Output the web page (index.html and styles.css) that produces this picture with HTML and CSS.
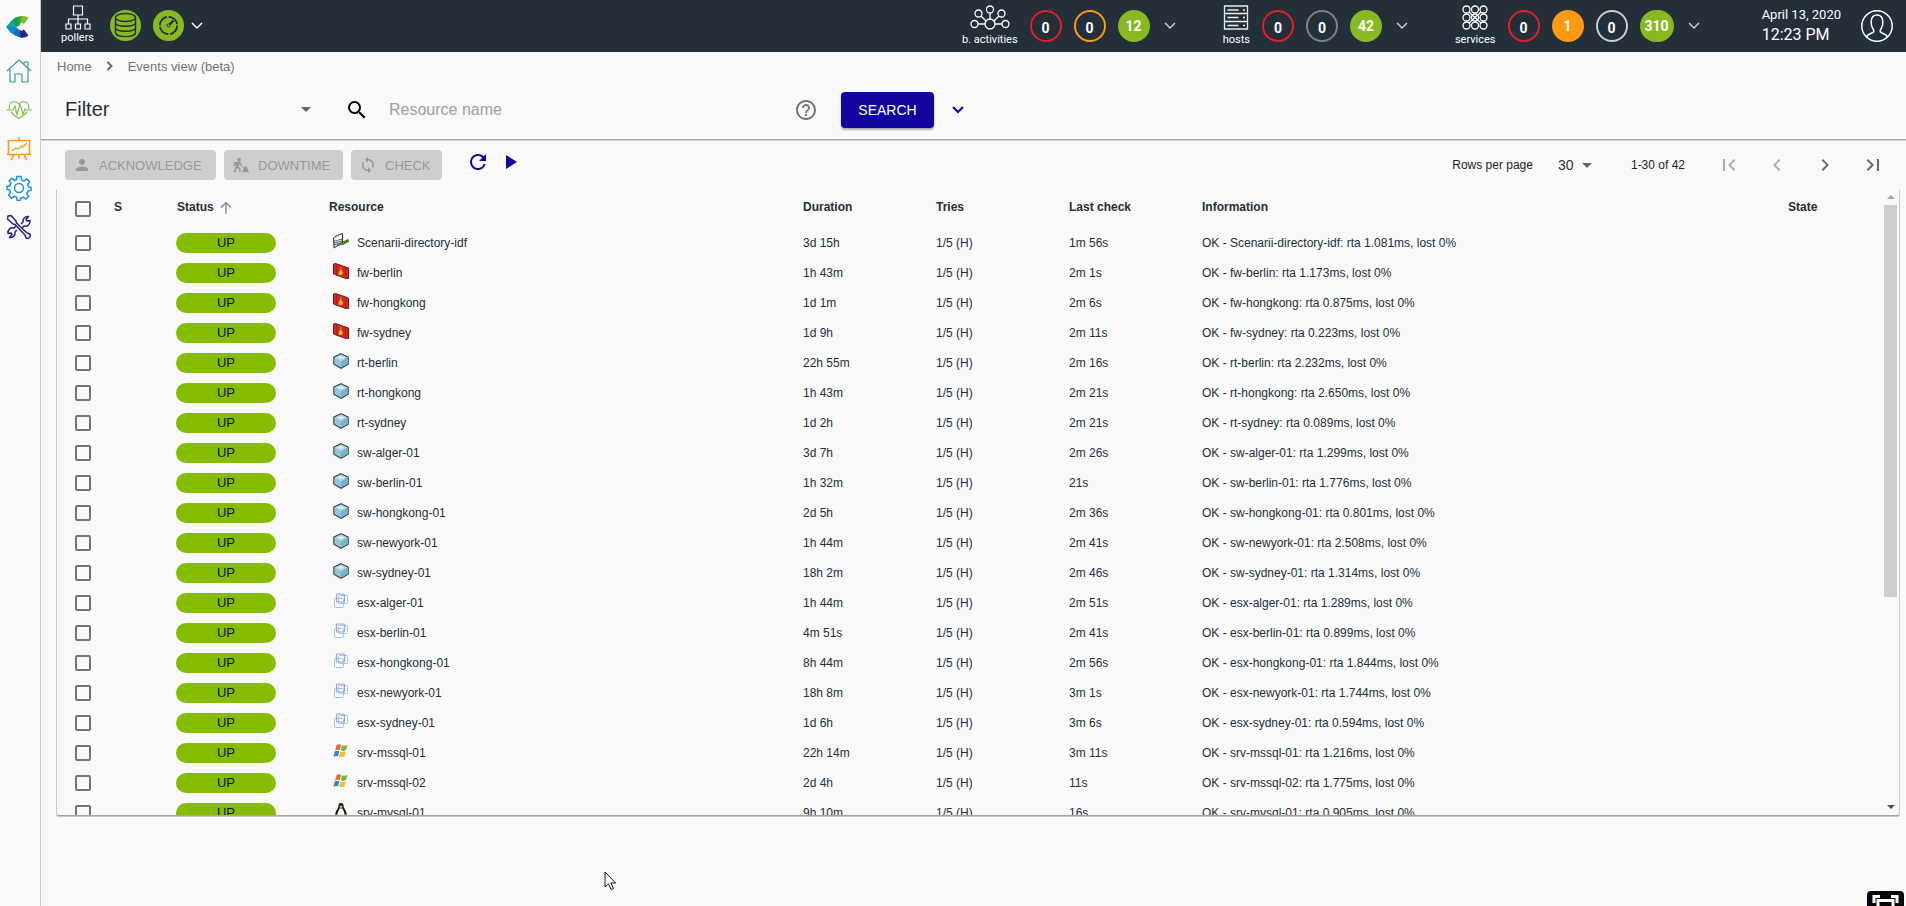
FILE: index.html
```html
<!DOCTYPE html>
<html lang="en">
<head>
<meta charset="utf-8">
<title>Events view</title>
<link rel="stylesheet" href="styles.css">
</head>
<body>
<svg class="sprite" aria-hidden="true">
  <symbol id="chev" viewBox="0 0 12 8"><path d="M1 1l5 5 5-5" fill="none" stroke="currentColor" stroke-width="1.5"/></symbol>
  <symbol id="caret" viewBox="0 0 10 5"><path d="M0 0h10L5 5z" fill="currentColor"/></symbol>
  <symbol id="scenario" viewBox="0 0 16 16"><path d="M.5 5L4 2.500 9.500.5v9L1 15z" fill="#e8e8e8" stroke="#333"/><path d="M1 8l8-2M1 10l8-2M1 12l7-2" stroke="#333" stroke-width=".8"/><path d="M2 5.500l6-3v3L2 7.500z" fill="#fff"/><path d="M6 11l9-4.500 1 1.500-6 3.500z" fill="#4f9a18" stroke="#27470d" stroke-width=".8"/><path d="M5 10l4 1-3 2.500L4 12z" fill="#777"/></symbol>
  <symbol id="firewall" viewBox="0 0 16 16"><path d="M.5 1l2-.5 13 4.500v10.500l-2 .2L.5 11z" fill="#d92626" stroke="#6d1714"/><path d="M3.500 1v11.500M12.500 5v10" stroke="#8d1716" stroke-width=".6"/><path d="M8 2.800C10 5 7.500 6 9.500 8c1.500 2 .5 4-1.500 4.500C5.500 13 4.500 11 5.500 9 7 7 7 5 8 2.800z" fill="#f9a72b" stroke="#80400b" stroke-width=".7"/></symbol>
  <symbol id="router" viewBox="0 0 16 16"><path d="M8 .7l7.200 3.500v7L8 15.300.8 11.200v-7z" fill="#93c5d8" stroke="#32424d" stroke-width="1.100"/><path d="M8 1.500l6.500 3L8 8.500 1.500 4.500z" fill="#b4d4e0"/><path d="M8 8.500l6.500-4V11L8 14.600z" fill="#79b3ca"/><path d="M4.500 4.500h6M6 3.500l4 2.500M10 3.500L6 6" stroke="#f6ffff" stroke-width=".7"/></symbol>
  <symbol id="esx" viewBox="0 0 16 16"><g fill="none"><rect x="5.500" y="2.500" width="9" height="8" rx="1" stroke="#92cbea"/><rect x="1.500" y="5.500" width="9" height="9" rx="1" stroke="#92cbea"/><rect x="3.500" y="1" width="8" height="8" rx="1" stroke="#a09fe0" stroke-width="1.200"/></g></symbol>
  <symbol id="windows" viewBox="0 0 16 16"><path d="M3.500 2.200q2.300-1.500 4.600-.3L6.700 7.200q-2.300-1-4.600.2z" fill="#e8672c"/><path d="M9 2.300q2.500 1 5.500-.4l-1.400 5.200q-2.800 1.500-5.400.2z" fill="#7cb342"/><path d="M1.800 8.400q2.400-1.200 4.600-.2L5 13.300q-2.300-1-4.600.4z" fill="#3284cf"/><path d="M7.400 8.500q2.700 1.200 5.400-.2l-1.500 5.200q-2.600 1.500-5.300.1z" fill="#f7bd31"/></symbol>
  <symbol id="linux" viewBox="0 0 16 16"><path d="M8 0c2 0 2.800 1.500 2.700 3.800.3 1.800 3.300 4.400 3 8.200L12 15H4l-1.700-3C2 8.500 5 5.600 5.300 3.800 5.200 1.500 6 0 8 0z" fill="#171717"/><path d="M6.500 5.500h3c.7 2 2.300 4 2 7L8 15l-3.500-2.500C4.300 9.500 5.800 7.500 6.500 5.500z" fill="#fff"/><path d="M6 3.500l2-1 2 1-2 1.800z" fill="#f2b321"/><path d="M1 13l3-2 3 4H2zM15 13l-3-2-3 4h5z" fill="#e9a91c"/></symbol>
</svg>
<div class="app">
  <nav class="sidebar" aria-label="Main">
    <a href="#" class="logo" aria-label="Centreon"><svg width="24" height="22" viewBox="0 0 24 22"><path d="M9 2Q12 0 17 0l-3 9-3 2-6-5z" fill="#35a936"/><path d="M16 0q4-.2 6.500 1.500L18 8q-2-1.500-4-1z" fill="#86be22"/><path d="M10 1L4 6l6 5 4-4z" fill="#15a05a"/><path d="M5 5L0 11l5 6 6-6z" fill="#17a5a4"/><path d="M1 11l4 6 5 3 4-5-4-4z" fill="#0b8de0"/><path d="M9 19q4 3 8 2.500L14 14l-4-1-3 4z" fill="#126bc0"/><path d="M14 14q2 1.500 4-.5l4.500 6q-4 3-8 2.200z" fill="#262088"/></svg></a>
    <a href="#" class="teal" aria-label="Home"><svg width="26" height="26" viewBox="0 0 26 26"><path d="M1 13L13 2l12 11M4 11v13h5v-8h7v8h6V11M18 6V4h4v6" fill="none" stroke="currentColor" stroke-width="1.200"/></svg></a>
    <a href="#" class="green" aria-label="Monitoring"><svg width="26" height="26" viewBox="0 0 26 26"><path d="M0 13h7l2-4 2 9 3-11 3 10 2-5 1 1h6M3.500 12C2 4 9 3 13 7c4-4 11-3 9.500 5M5 15q3 3.500 8 6.500 5-3 8-6.500" fill="none" stroke="currentColor" stroke-width="1.200"/></svg></a>
    <a href="#" class="orange" aria-label="Reporting"><svg width="26" height="26" viewBox="0 0 26 26"><path d="M2.500 4.500h21v14h-21zM13 1v3M1 18.500h24M8 19l-3 5M18 19l3 5M13 19v4" fill="none" stroke="currentColor" stroke-width="1.600"/><path d="M6 15l4-3 2 1 4-3 1 1 4-4" fill="none" stroke="currentColor" stroke-width="1.400"/></svg></a>
    <a href="#" class="blue" aria-label="Configuration"><svg width="26" height="26" viewBox="0 0 26 26"><path d="M11 1.500h4l.7 3.400 2.300 1 2.900-2 2.700 2.800-1.900 2.900 1 2.300 2.300.5v3l-3.200.7-1 2.400 1.900 2.900-2.800 2.700-2.900-1.900-2.300 1-.5 2.300h-3l-.6-3.200-2.400-1-2.900 1.900L2.600 20l1.900-2.800-1-2.400-2.500-.4v-3l3-.6 1-2.400L3.200 6l2.700-2.700 2.900 2 1.700-.7z" fill="none" stroke="currentColor" stroke-width="1.500"/><circle cx="13" cy="13" r="4.500" fill="none" stroke="currentColor" stroke-width="1.400"/></svg></a>
    <a href="#" class="navy" aria-label="Administration"><svg width="26" height="26" viewBox="0 0 26 26"><g fill="none" stroke="currentColor" stroke-width="1.500" stroke-linejoin="round"><path d="M2 2l3-.5L10 7l.5 2L21 19l3 1 .5 2-2.500 2.500-2-.5L19 21 9 10.500 7 10 1.500 5z"/><path d="M15 10l2-2c-.5-3 2-6 5.500-5.500L20 5.500l1 1.500 3-.5c.5 4-3 6.500-6 5.500l-2 2M11 16l-2 2c.5 3.500-2 6-5.500 5.500L6 20.500 5 19l-3 .5c-.5-4 3-6.500 6-5.500l2-2"/></g></svg></a>
  </nav>
  <div class="page">
    <header class="topbar">
      <div class="topic"><svg width="26" height="25" viewBox="0 0 26 25"><g fill="none" stroke="#fff" stroke-width="1.200"><path d="M8.500 1h9v9h-9zM13 10v9M3.500 19v-5h19v5M1 19h5v5H1zM10.500 19h5v5h-5zM20 19h5v5h-5z"/></g></svg><span>pollers</span></div>
      <svg class="status-icon" width="31" height="31" viewBox="0 0 31 31"><circle cx="15.500" cy="15.500" r="15.500" fill="#88b922"/><g fill="none" stroke="#232f39" stroke-width="1.400"><ellipse cx="15.500" cy="7.500" rx="10" ry="4"/><path d="M5.500 7.500v15c0 5.500 20 5.500 20 0v-15M5.500 12.500c0 5 20 5 20 0M5.500 17.500c0 5 20 5 20 0"/></g></svg>
      <svg class="status-icon" width="31" height="31" viewBox="0 0 31 31"><circle cx="15.500" cy="15.500" r="15.500" fill="#88b922"/><g fill="none" stroke="#232f39"><circle cx="15.500" cy="15.500" r="8.700" stroke-width="1.800" stroke-dasharray="12 1.600"/><circle cx="15.500" cy="15.500" r="1.500"/><path d="M16.500 14.500l4-4" stroke-width="2.400"/></g></svg>
      <button class="more" aria-label="Poller details"><svg width="12" height="8"><use href="#chev"/></svg></button>
      <div class="counters">
        <div class="group">
          <div class="topic"><svg width="40" height="25" viewBox="0 0 40 25"><g fill="none" stroke="#fff" stroke-width="1.300"><circle cx="20" cy="19" r="5"/><circle cx="20" cy="4.500" r="3.500"/><circle cx="8.500" cy="8.500" r="3.500"/><circle cx="31.500" cy="8.500" r="3.500"/><circle cx="4.500" cy="19" r="3.500"/><circle cx="35.500" cy="19" r="3.500"/><path d="M20 8v6M11 11l5 5M29 11l-5 5M8 19h7M25 19h7"/></g></svg><span>b. activities</span></div>
          <a href="#" class="count red">0</a><a href="#" class="count amber">0</a><a href="#" class="count ok">12</a>
          <button class="more" aria-label="Activities details"><svg width="12" height="8"><use href="#chev"/></svg></button>
        </div>
        <div class="group">
          <div class="topic"><svg width="26" height="25" viewBox="0 0 26 25"><g fill="none" stroke="#eee" stroke-width="1.300"><path d="M1.500 1h23v23h-23zM1.500 8.500h23M1.500 16.500h23M4.500 5h11M4.500 12.500h11M4.500 20.500h11M20 5h2M20 12.500h2M20 20.500h2"/></g></svg><span>hosts</span></div>
          <a href="#" class="count red">0</a><a href="#" class="count grey">0</a><a href="#" class="count ok">42</a>
          <button class="more" aria-label="Hosts details"><svg width="12" height="8"><use href="#chev"/></svg></button>
        </div>
        <div class="group">
          <div class="topic"><svg width="26" height="25" viewBox="0 0 26 25"><g fill="none" stroke="#fff" stroke-width="1.300"><circle cx="4.500" cy="4.500" r="3.500"/><circle cx="13" cy="4.500" r="3.500"/><circle cx="21.500" cy="4.500" r="3.500"/><circle cx="4.500" cy="12.500" r="3.500"/><circle cx="13" cy="12.500" r="3.500"/><circle cx="21.500" cy="12.500" r="3.500"/><circle cx="4.500" cy="20.500" r="3.500"/><circle cx="13" cy="20.500" r="3.500"/><circle cx="21.500" cy="20.500" r="3.500"/><path d="M7 7l12 11M19 7L7 18"/></g></svg><span>services</span></div>
          <a href="#" class="count red">0</a><a href="#" class="count warn">1</a><a href="#" class="count light">0</a><a href="#" class="count ok">310</a>
          <button class="more" aria-label="Services details"><svg width="12" height="8"><use href="#chev"/></svg></button>
        </div>
      </div>
      <div class="clock"><span class="date">April 13, 2020</span><span class="time">12:23 PM</span></div>
      <button class="user" aria-label="Profile"><svg width="32" height="32" viewBox="0 0 32 32"><g fill="none" stroke="#fff" stroke-width="1.500"><circle cx="16" cy="16" r="15.200"/><path d="M5.500 27c1-3 5-3.500 6.500-4.500 2-1.500.5-3-.5-4.500-1-2-1.500-4-1.300-6.500.2-4 2.300-6.500 5.800-6.500s5.600 2.500 5.800 6.500c.2 2.500-.3 4.500-1.300 6.500-1 1.500-2.500 3-.5 4.500 1.500 1 5.500 1.500 6.500 4.500"/></g></svg></button>
    </header>
    <nav class="crumbs" aria-label="Breadcrumb"><a href="#">Home</a><svg width="8" height="10" viewBox="0 0 8 10"><path d="M1.500 1l4 4-4 4" fill="none" stroke="#666" stroke-width="1.900"/></svg><a href="#">Events view (beta)</a></nav>
    <form class="filters">
      <button type="button" class="filter-select"><span>Filter</span><svg width="10" height="5"><use href="#caret"/></svg></button>
      <svg class="magnifier" width="24" height="24" viewBox="0 0 24 24"><path d="M15.500 14h-.79l-.28-.27A6.471 6.471 0 0 0 16 9.500 6.500 6.500 0 1 0 9.500 16c1.610 0 3.090-.59 4.230-1.570l.27.28v.79l5 4.990L20.490 19l-4.990-5zm-6 0C7.010 14 5 11.990 5 9.500S7.010 5 9.500 5 14 7.010 14 9.500 11.990 14 9.500 14z"/></svg>
      <input class="search-input" type="text" placeholder="Resource name" aria-label="Resource name">
      <button type="button" class="help" aria-label="Help"><svg width="24" height="24" viewBox="0 0 24 24"><path fill="#757575" d="M11 18h2v-2h-2v2zm1-16C6.480 2 2 6.480 2 12s4.480 10 10 10 10-4.480 10-10S17.520 2 12 2zm0 18c-4.410 0-8-3.590-8-8s3.590-8 8-8 8 3.590 8 8-3.590 8-8 8zm0-14c-2.210 0-4 1.790-4 4h2c0-1.100.9-2 2-2s2 .9 2 2c0 2-3 1.750-3 5h2c0-2.250 3-2.500 3-5 0-2.210-1.790-4-4-4z"/></svg></button>
      <button type="submit" class="search-button">SEARCH</button>
      <button type="button" class="expand" aria-label="More filters"><svg width="12" height="8" viewBox="0 0 12 8"><path d="M1 1l5 5 5-5" fill="none" stroke="currentColor" stroke-width="2"/></svg></button>
    </form>
    <div class="toolbar">
      <button class="action ack" disabled><svg width="18" height="18" viewBox="0 0 24 24"><path fill="currentColor" d="M12 12c2.210 0 4-1.790 4-4s-1.790-4-4-4-4 1.790-4 4 1.790 4 4 4zm0 2c-2.670 0-8 1.340-8 4v2h16v-2c0-2.660-5.330-4-8-4z"/></svg>ACKNOWLEDGE</button>
      <button class="action down" disabled><svg width="18" height="18" viewBox="0 0 20 20"><g fill="currentColor"><circle cx="8" cy="4" r="2"/><path d="M6 6l3 .5 2 3.500-1 1-2-2-.5 3 2 2v4H8v-3l-2.500-2L4 18H2l2-7V9l-1 2H1.500l1-4zM16 11l3 7h-8l3-6z"/></g><path d="M8 8l6 6" stroke="currentColor"/></svg>DOWNTIME</button>
      <button class="action check" disabled><svg width="18" height="18" viewBox="0 0 24 24"><path fill="currentColor" d="M12 4V1L8 5l4 4V6c3.310 0 6 2.690 6 6 0 1.010-.25 1.970-.7 2.800l1.460 1.460A7.930 7.930 0 0 0 20 12c0-4.420-3.580-8-8-8zm0 14c-3.310 0-6-2.690-6-6 0-1.010.25-1.970.7-2.800L5.240 7.740A7.930 7.930 0 0 0 4 12c0 4.420 3.580 8 8 8v3l4-4-4-4v3z"/></svg>CHECK</button>
      <button class="icon-button refresh" aria-label="Refresh"><svg width="24" height="24" viewBox="0 0 24 24"><path fill="currentColor" d="M17.650 6.350A7.958 7.958 0 0 0 12 4a8 8 0 1 0 7.730 10h-2.080A5.990 5.990 0 0 1 12 18c-3.310 0-6-2.690-6-6s2.690-6 6-6c1.660 0 3.140.69 4.220 1.780L13 11h7V4l-2.350 2.350z"/></svg></button>
      <button class="icon-button play" aria-label="Autorefresh"><svg width="24" height="24" viewBox="0 0 24 24"><path fill="currentColor" d="M8 5v14l11-7z"/></svg></button>
      <div class="pager">
        <label for="rows">Rows per page</label>
        <span class="rows"><select id="rows"><option>30</option></select><svg width="10" height="5"><use href="#caret"/></svg></span>
        <span class="range">1-30 of 42</span>
        <button disabled aria-label="First page"><svg width="24" height="24" viewBox="0 0 24 24"><path fill="currentColor" d="M18.410 16.590L13.820 12l4.590-4.590L17 6l-6 6 6 6zM6 6h2v12H6z"/></svg></button>
        <button disabled aria-label="Previous page"><svg width="24" height="24" viewBox="0 0 24 24"><path fill="currentColor" d="M15.410 7.410L14 6l-6 6 6 6 1.410-1.410L10.830 12z"/></svg></button>
        <button aria-label="Next page"><svg width="24" height="24" viewBox="0 0 24 24"><path fill="currentColor" d="M10 6L8.590 7.410 13.170 12l-4.580 4.590L10 18l6-6z"/></svg></button>
        <button aria-label="Last page"><svg width="24" height="24" viewBox="0 0 24 24"><path fill="currentColor" d="M5.590 7.410L10.180 12l-4.590 4.590L7 18l6-6-6-6zM16 6h2v12h-2z"/></svg></button>
      </div>
    </div>
    <main class="listing">
      <div class="viewport">
        <table>
          <colgroup><col class="c-check"><col class="c-sev"><col class="c-status"><col class="c-resource"><col class="c-mid"><col class="c-mid"><col class="c-mid"><col class="c-info"><col class="c-state"></colgroup>
          <thead><tr><th><input type="checkbox" aria-label="Select all"></th><th>S</th><th><div class="sorted">Status<svg width="16" height="16" viewBox="0 0 24 24"><path fill="#808080" d="M4 12l1.410 1.410L11 7.830V22h2V7.830l5.580 5.590L20 12l-8-8-8 8z"/></svg></div></th><th>Resource</th><th>Duration</th><th>Tries</th><th>Last check</th><th>Information</th><th>State</th></tr></thead>
          <tbody id="events"></tbody>
        </table>
      </div>
      <div class="scroll" aria-hidden="true"><svg width="8" height="4" viewBox="0 0 8 4"><path d="M0 4h8L4 0z" fill="#a3a3a3"/></svg><div class="track"><div class="thumb"></div></div><svg width="8" height="4" viewBox="0 0 8 4"><path d="M0 0h8L4 4z" fill="#505050"/></svg></div>
    </main>
  </div>
</div>
<svg class="pointer" width="13" height="20" viewBox="0 0 13 20" aria-hidden="true"><path d="M1 1v15l3.500-3.200 2.500 5.700 2.400-1-2.500-5.500h4.800z" fill="#fff" stroke="#111"/></svg>
<button class="fullscreen" aria-label="Full screen"><svg width="37" height="37" viewBox="0 0 37 37"><path d="M7 12V5.500h6M24 5.500h6V12" fill="none" stroke="#fff" stroke-width="3"/><path d="M11 24V9.500h15V24" fill="none" stroke="#fff" stroke-width="3"/></svg></button>
<script src="events.js"></script>
</body>
</html>
```
FILE: styles.css
```css
* { box-sizing: border-box; }
body { margin: 0; background: #f9f9f9; color: #232f39; font-family: "Liberation Sans", Arial, sans-serif; font-size: 12px; overflow: hidden; }
button { border: 0; padding: 0; background: none; color: inherit; font-family: inherit; }
a { color: inherit; text-decoration: none; }
svg { display: block; flex: none; }
.sprite { position: absolute; width: 0; height: 0; }
.app { display: flex; height: 100vh; }

.sidebar { flex: none; width: 41px; border-right: 1px solid #c8c8c8; display: flex; flex-direction: column; align-items: center; gap: 13px; padding-top: 16px; padding-right: 2px; }
.logo { margin-bottom: 7px; padding-right: 3px; }
.teal { color: #3a9a9e; }
.green { color: #88c057; }
.orange { color: #ff9a13; }
.blue { color: #1b8fe0; }
.navy { color: #262088; }

.page { flex: 1; min-width: 0; display: flex; flex-direction: column; }
.topbar { flex: none; height: 52px; background: #232f39; color: #fff; display: flex; align-items: flex-start; padding: 0 13px 0 20px; font-family: Roboto, sans-serif; }
.topic { display: flex; flex-direction: column; align-items: center; padding-top: 5px; font-size: 11px; line-height: 12px; gap: 4px; }
.topbar > .topic { gap: 2px; }
.status-icon { margin: 10px 0 0 16px; }
.status-icon + .status-icon { margin-left: 12px; }
.more { align-self: flex-start; margin: 22px 0 0 7px; color: #fff; }
.counters { margin-left: auto; display: flex; gap: 47px; }
.group { display: flex; gap: 12px; }
.group .more { margin-left: 2px; color: #ccc; }
.count { min-width: 32px; height: 32px; margin-top: 10px; border-radius: 16px; border: 2px solid; color: #fff; font-size: 14px; line-height: 28px; font-weight: 700; text-align: center; padding: 2px 0 0; }
.count.red { border-color: #ed1c24; }
.count.amber { border-color: #ff9a13; }
.count.grey { border-color: #818285; }
.count.light { border-color: #cdcdcd; }
.count.warn, .count.ok { padding: 0 3px; border-color: transparent; background: #ff9a13 border-box; }
.count.ok { background: #88b922 border-box; }
.clock { margin-left: 62px; padding-top: 6px; display: flex; flex-direction: column; }
.date { font-size: 13px; line-height: 18px; }
.time { font-size: 16px; line-height: 22px; }
.user { margin: 10px 0 0 20px; }

.crumbs { flex: none; height: 28px; display: flex; align-items: center; padding-left: 16px; gap: 14px; font-size: 13px; color: #737373; }
.filters { flex: none; height: 60px; display: flex; align-items: center; padding-left: 24px; border-bottom: 1px solid #aaa; box-shadow: 0 1px 0 #d0d0d0; }
.filter-select { width: 246px; display: flex; align-items: center; justify-content: space-between; font-size: 20px; color: #232f39; }
.filter-select svg { color: #666; }
.magnifier { margin-left: 34px; }
.search-input { width: 382px; margin-left: 20px; padding: 0; border: 0; background: none; font: 16px "Liberation Sans", Arial, sans-serif; color: #232f39; outline: 0; }
.search-input::placeholder { color: #a0a0a0; opacity: 1; }
.help { margin-left: 23px; }
.search-button { width: 93px; height: 36px; margin-left: 23px; border-radius: 4px; background: #10069f; color: #fff; font-size: 14px; box-shadow: 0 2px 2px rgba(0,0,0,.3); }
.expand { margin-left: 18px; color: #10069f; }

.toolbar { flex: none; height: 50px; display: flex; align-items: center; padding: 0 21px 0 24px; gap: 8px; }
.action { height: 30px; border-radius: 4px; background: #cdcfcf; color: #979a9b; display: flex; align-items: center; gap: 8px; padding-left: 8px; font-size: 13px; }
.ack { min-width: 151px; }
.down { min-width: 119px; }
.check { min-width: 91px; }
.icon-button { color: #10069f; margin-bottom: 6px; }
.refresh { margin-left: 16px; }
.pager { margin-left: auto; display: flex; align-items: center; color: #232323; }
.rows { margin-left: 25px; width: 36px; display: flex; align-items: center; }
.rows select { appearance: none; border: 0; background: none; padding: 0; width: 24px; font: 14px "Liberation Sans", Arial, sans-serif; color: #333; }
.rows svg { color: #666; }
.range { margin-left: 37px; margin-right: 8px; }
.pager button { margin-left: 24px; color: #6b6b6b; }
.pager button:disabled { color: #adadad; }

.listing { flex: 1; min-height: 0; margin: 0 6px 90px 15px; display: flex; border: 1px solid #c8c8c8; border-top: 0; border-bottom-color: #a3a3a3; border-radius: 0 0 3px 3px; box-shadow: 0 1px 0 #c8c8c8; }
.viewport { flex: 1; min-width: 0; overflow: hidden; }
table { width: 100%; border-collapse: collapse; table-layout: fixed; line-height: 14px; }
.c-check { width: 57px; } .c-sev { width: 63px; } .c-status { width: 152px; } .c-resource { width: 474px; }
.c-mid { width: 133px; } .c-state { width: 96px; }
th, td { padding: 0; height: 30px; text-align: left; white-space: nowrap; vertical-align: middle; }
th { height: 38px; padding-bottom: 4px; font-weight: 700; }
th:first-child, td:first-child { padding-left: 18px; }
th:first-child { padding-bottom: 0; }
table input { display: block; appearance: none; width: 16px; height: 16px; margin: 0; border: 2px solid #757575; border-radius: 2px; }
.sorted { display: flex; align-items: center; gap: 4px; }
.pill { width: 100px; height: 20px; margin-left: -1px; border-radius: 10px; background: #84bd00; color: #111; font-size: 13px; line-height: 19px; text-align: center; }
.resource { display: flex; align-items: center; gap: 8px; padding-left: 4px; }
.resource svg { margin-bottom: 4px; }
.scroll { flex: none; width: 15px; display: flex; flex-direction: column; align-items: center; padding: 5px 2px 6px 0; gap: 6px; }
.track { flex: 1; width: 13px; }
.thumb { height: 66%; background: #cdcfcf; }

.pointer { position: fixed; left: 604px; top: 871px; }
.fullscreen { position: fixed; right: 2px; bottom: -22px; height: 37px; border-radius: 4px; background: #05080c; }
```
FILE: events.js
```js
const events = [
  ["scenario", "Scenarii-directory-idf", "3d 15h", "1m 56s", "1.081"],
  ["firewall", "fw-berlin", "1h 43m", "2m 1s", "1.173"],
  ["firewall", "fw-hongkong", "1d 1m", "2m 6s", "0.875"],
  ["firewall", "fw-sydney", "1d 9h", "2m 11s", "0.223"],
  ["router", "rt-berlin", "22h 55m", "2m 16s", "2.232"],
  ["router", "rt-hongkong", "1h 43m", "2m 21s", "2.650"],
  ["router", "rt-sydney", "1d 2h", "2m 21s", "0.089"],
  ["router", "sw-alger-01", "3d 7h", "2m 26s", "1.299"],
  ["router", "sw-berlin-01", "1h 32m", "21s", "1.776"],
  ["router", "sw-hongkong-01", "2d 5h", "2m 36s", "0.801"],
  ["router", "sw-newyork-01", "1h 44m", "2m 41s", "2.508"],
  ["router", "sw-sydney-01", "18h 2m", "2m 46s", "1.314"],
  ["esx", "esx-alger-01", "1h 44m", "2m 51s", "1.289"],
  ["esx", "esx-berlin-01", "4m 51s", "2m 41s", "0.899"],
  ["esx", "esx-hongkong-01", "8h 44m", "2m 56s", "1.844"],
  ["esx", "esx-newyork-01", "18h 8m", "3m 1s", "1.744"],
  ["esx", "esx-sydney-01", "1d 6h", "3m 6s", "0.594"],
  ["windows", "srv-mssql-01", "22h 14m", "3m 11s", "1.216"],
  ["windows", "srv-mssql-02", "2d 4h", "11s", "1.775"],
  ["linux", "srv-mysql-01", "9h 10m", "16s", "0.905"],
];

document.getElementById("events").innerHTML = events.map(([icon, name, duration, last, rta]) => `
  <tr>
    <td><input type="checkbox" aria-label="Select ${name}"></td>
    <td></td>
    <td><div class="pill">UP</div></td>
    <td><div class="resource"><svg width="16" height="16"><use href="#${icon}"/></svg>${name}</div></td>
    <td>${duration}</td>
    <td>1/5 (H)</td>
    <td>${last}</td>
    <td>OK - ${name}: rta ${rta}ms, lost 0%</td>
    <td></td>
  </tr>`).join("");
```
